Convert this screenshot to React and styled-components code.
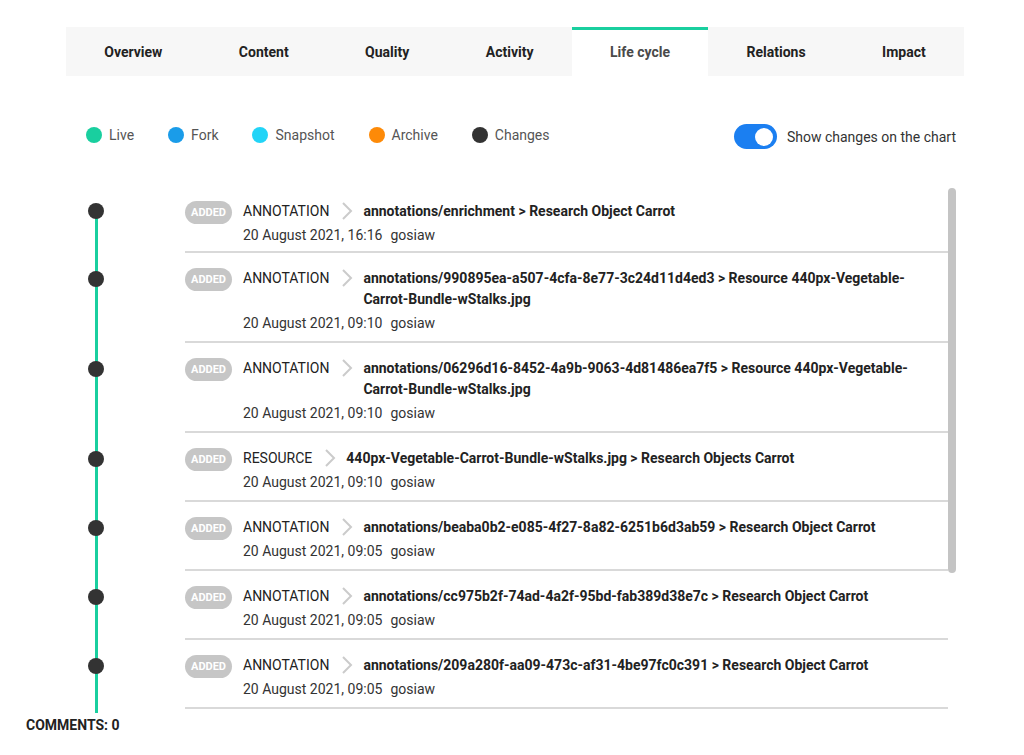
import React, { useState } from 'react';
import styled, { createGlobalStyle } from 'styled-components';

const GlobalStyle = createGlobalStyle`
    html, body {
        margin: 0;
        padding: 0;
        background: #fff;
        font-family: Roboto, "Noto Sans", "Liberation Sans", sans-serif;
        color: #222;
    }
    * { box-sizing: border-box; }
`;

const tabs = ['Overview', 'Content', 'Quality', 'Activity', 'Life cycle', 'Relations', 'Impact'];

const legend = [
    { label: 'Live', color: '#19cf9f' },
    { label: 'Fork', color: '#1a9ce9' },
    { label: 'Snapshot', color: '#22d4f7' },
    { label: 'Archive', color: '#fd8a08' },
    { label: 'Changes', color: '#333333' },
];

const changes = [
    { type: 'ANNOTATION', path: 'annotations/enrichment > Research Object Carrot', date: '20 August 2021, 16:16' },
    { type: 'ANNOTATION', path: 'annotations/990895ea-a507-4cfa-8e77-3c24d11d4ed3 > Resource 440px-Vegetable-Carrot-Bundle-wStalks.jpg', date: '20 August 2021, 09:10' },
    { type: 'ANNOTATION', path: 'annotations/06296d16-8452-4a9b-9063-4d81486ea7f5 > Resource 440px-Vegetable-Carrot-Bundle-wStalks.jpg', date: '20 August 2021, 09:10' },
    { type: 'RESOURCE', path: '440px-Vegetable-Carrot-Bundle-wStalks.jpg > Research Objects Carrot', date: '20 August 2021, 09:10' },
    { type: 'ANNOTATION', path: 'annotations/beaba0b2-e085-4f27-8a82-6251b6d3ab59 > Research Object Carrot', date: '20 August 2021, 09:05' },
    { type: 'ANNOTATION', path: 'annotations/cc975b2f-74ad-4a2f-95bd-fab389d38e7c > Research Object Carrot', date: '20 August 2021, 09:05' },
    { type: 'ANNOTATION', path: 'annotations/209a280f-aa09-473c-af31-4be97fc0c391 > Research Object Carrot', date: '20 August 2021, 09:05' },
];

export default function App() {
    const [showChanges, setShowChanges] = useState(true);
    return (
        <Page>
            <GlobalStyle />
            <TabBar>
                {tabs.map((tab) => (
                    <Tab key={tab} $active={tab === 'Life cycle'}>{tab}</Tab>
                ))}
            </TabBar>
            <Toolbar>
                <Legend>
                    {legend.map((item) => (
                        <LegendItem key={item.label}>
                            <Dot $color={item.color} />
                            {item.label}
                        </LegendItem>
                    ))}
                </Legend>
                <ToggleLabel>
                    <Toggle $on={showChanges} onClick={() => setShowChanges(!showChanges)}>
                        <Knob />
                    </Toggle>
                    Show changes on the chart
                </ToggleLabel>
            </Toolbar>
            <TimelinePanel>
                <Timeline>
                    {changes.map((change, index) => (
                        <Row key={index}>
                            <Rail>
                                <RailDot $first={index === 0} />
                            </Rail>
                            <Entry $first={index === 0}>
                                <Badge>ADDED</Badge>
                                <EntryBody>
                                    <EntryTitle>
                                        <Type>{change.type}</Type>
                                        <Chevron width="12" height="20" viewBox="0 0 12 20">
                                            <polyline points="2,2 10,10 2,18" fill="none" stroke="#cbcbcb" strokeWidth="2" />
                                        </Chevron>
                                        <Path>{change.path}</Path>
                                    </EntryTitle>
                                    <Meta>
                                        {change.date}
                                        <User>gosiaw</User>
                                    </Meta>
                                </EntryBody>
                            </Entry>
                        </Row>
                    ))}
                </Timeline>
                <ScrollTrack>
                    <ScrollThumb />
                </ScrollTrack>
            </TimelinePanel>
            <Comments>COMMENTS: 0</Comments>
        </Page>
    );
}

const Page = styled.div`
    width: 1024px;
    height: 755px;
    padding-top: 27px;
    overflow: hidden;
`;

const TabBar = styled.div`
    display: flex;
    width: 898px;
    height: 49px;
    margin-left: 66px;
    background: #f7f7f7;
`;

const Tab = styled.div`
    flex: 1 1 auto;
    display: flex;
    align-items: center;
    justify-content: center;
    font-size: 14px;
    font-weight: 700;
    color: ${(p) => (p.$active ? '#4a4a4a' : '#222')};
    background: ${(p) => (p.$active ? '#fff' : 'transparent')};
    border-top: 3px solid ${(p) => (p.$active ? '#19cf9f' : 'transparent')};
    padding-bottom: 3px;
`;

const Toolbar = styled.div`
    display: flex;
    align-items: center;
    justify-content: space-between;
    width: 870px;
    margin: 48px 0 0 86px;
    height: 25px;
`;

const Legend = styled.div`
    display: flex;
    align-items: center;
    gap: 34px;
    margin-top: -4px;
`;

const LegendItem = styled.div`
    display: flex;
    align-items: center;
    gap: 7px;
    font-size: 14px;
    color: #555;
`;

const Dot = styled.span`
    width: 16px;
    height: 16px;
    border-radius: 50%;
    background: ${(p) => p.$color};
`;

const ToggleLabel = styled.div`
    display: flex;
    align-items: center;
    gap: 10px;
    font-size: 14px;
    color: #333;
`;

const Toggle = styled.button`
    display: flex;
    align-items: center;
    justify-content: ${(p) => (p.$on ? 'flex-end' : 'flex-start')};
    width: 43px;
    height: 25px;
    padding: 0 4px;
    border: none;
    border-radius: 13px;
    background: ${(p) => (p.$on ? '#1b7ff1' : '#ccc')};
    cursor: pointer;
`;

const Knob = styled.span`
    width: 18px;
    height: 18px;
    border-radius: 50%;
    background: #fff;
`;

const TimelinePanel = styled.div`
    display: flex;
    width: 876px;
    height: 525px;
    margin: 39px 0 0 80px;
    overflow: hidden;
`;

const Timeline = styled.div`
    flex: 1;
    min-width: 0;
    background: linear-gradient(#19cf9f, #19cf9f) no-repeat 14.5px 23px / 3px 100%;
`;

const ScrollTrack = styled.div`
    flex: none;
    width: 8px;
`;

const ScrollThumb = styled.div`
    height: 385px;
    border-radius: 4px;
    background: #c4c4c4;
`;

const Row = styled.div`
    display: flex;
`;

const Rail = styled.div`
    flex: none;
    width: 32px;
    margin-right: 73px;
`;

const RailDot = styled.span`
    display: block;
    width: 16px;
    height: 16px;
    margin: ${(p) => (p.$first ? '15px' : '17.5px')} 0 0 8px;
    border-radius: 50%;
    background: #333;
`;

const Entry = styled.div`
    flex: 1;
    display: flex;
    align-items: flex-start;
    padding: ${(p) => (p.$first ? '13px 30px 5px 0' : '15px 30px 7px 0')};
    border-bottom: 2px solid #d9d9d9;
`;

const Badge = styled.span`
    flex: none;
    width: 47px;
    height: 23px;
    margin: 0 11px 0 0;
    border-radius: 12px;
    background: #c6c6c6;
    color: #fff;
    font-size: 11px;
    font-weight: 700;
    line-height: 23px;
    text-align: center;
`;

const EntryBody = styled.div`
    flex: 1;
    min-width: 0;
`;

const EntryTitle = styled.div`
    display: flex;
    align-items: flex-start;
    font-size: 14px;
    line-height: 21px;
`;

const Type = styled.span`
    flex: none;
    color: #222;
`;

const Chevron = styled.svg`
    flex: none;
    margin: 0 10px 0 12px;
`;

const Path = styled.span`
    flex: 1;
    font-weight: 700;
    color: #222;
`;

const Meta = styled.div`
    margin-top: 3px;
    font-size: 14px;
    line-height: 21px;
    color: #333;
`;

const User = styled.span`
    margin-left: 8px;
`;

const Comments = styled.div`
    margin: 4px 0 0 26px;
    font-size: 14px;
    font-weight: 700;
    line-height: 16px;
    color: #222;
`;
